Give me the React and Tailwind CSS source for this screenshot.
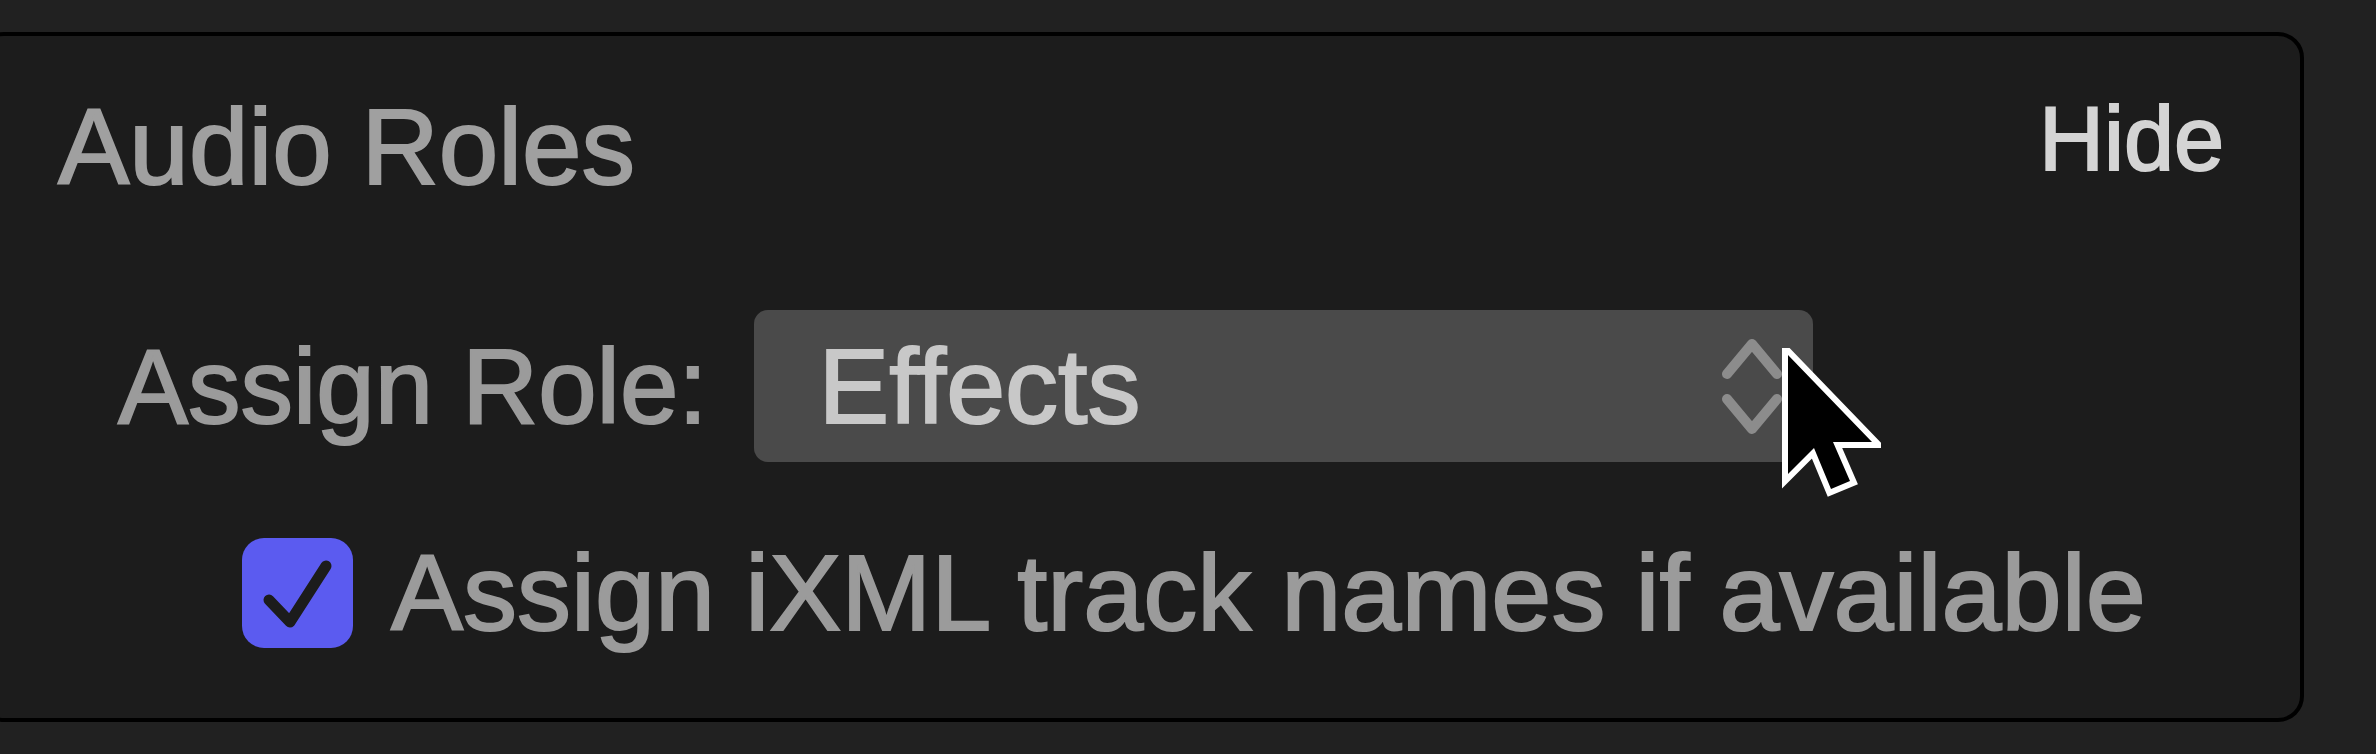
import { useState } from 'react';

const ROLES = ['Dialogue', 'Music', 'Effects'];

function Chevrons() {
  return (
    <svg width="64" height="100" viewBox="0 0 64 100" fill="none" className="shrink-0">
      <polyline points="7,38 32,8 57,38" stroke="#8c8c8c" strokeWidth="10" strokeLinecap="round" strokeLinejoin="round" />
      <polyline points="7,63 32,93 57,63" stroke="#8c8c8c" strokeWidth="10" strokeLinecap="round" strokeLinejoin="round" />
    </svg>
  );
}

function Cursor() {
  return (
    <svg
      width="100"
      height="156"
      viewBox="0 0 100 156"
      className="pointer-events-none absolute left-[1027px] top-[38px]"
    >
      <polygon
        points="7,7 7,126 33,100 50,141 69,133 52,94 91,94"
        fill="#000"
        stroke="#fff"
        strokeWidth="12"
        strokeLinejoin="miter"
        paintOrder="stroke"
      />
    </svg>
  );
}

export default function App() {
  const [role] = useState(ROLES[2]);
  const [useIxml, setUseIxml] = useState(true);

  return (
    <div className="h-[754px] w-[2376px] overflow-hidden bg-[#212121] pt-[32px] font-['Liberation_Sans',Arial,sans-serif] [-webkit-text-stroke:2px_currentColor]">
      <div className="-ml-[22px] h-[690px] w-[2326px] rounded-[26px] border-4 border-black bg-[#1c1c1c] px-[76px] pt-[58px]">
        <div className="flex items-start justify-between">
          <h2 className="text-[107px] leading-none text-[#a0a0a0]">Audio Roles</h2>
          <button className="text-[90px] leading-none text-[#d4d4d4]">Hide</button>
        </div>

        <div className="mt-[109px] flex items-center pl-[60px]">
          <span className="text-[105px] leading-none text-[#9b9b9b]">Assign Role:</span>
          <div className="relative ml-[47px] flex h-[152px] w-[1059px] items-center justify-between rounded-[14px] bg-[#4a4a4a] pl-[64px] pr-[29px]">
            <span className="text-[106px] leading-none text-[#c8c8c8]">{role}</span>
            <Chevrons />
            <Cursor />
          </div>
        </div>

        <label className="mt-[76px] flex items-center pl-[184px]">
          <button
            type="button"
            onClick={() => setUseIxml((v) => !v)}
            className={`flex h-[110px] w-[111px] shrink-0 items-center justify-center rounded-[22px] ${
              useIxml ? 'bg-[#5b5bf0]' : 'bg-[#4a4a4a]'
            }`}
          >
            {useIxml && (
              <svg width="111" height="110" viewBox="0 0 111 110" fill="none">
                <polyline points="27,62 48,84 84,28" stroke="#1c1c1c" strokeWidth="11" strokeLinecap="round" strokeLinejoin="round" />
              </svg>
            )}
          </button>
          <span className="ml-[38px] text-[108px] leading-none text-[#9b9b9b]">Assign iXML track names if available</span>
        </label>
      </div>
    </div>
  );
}
